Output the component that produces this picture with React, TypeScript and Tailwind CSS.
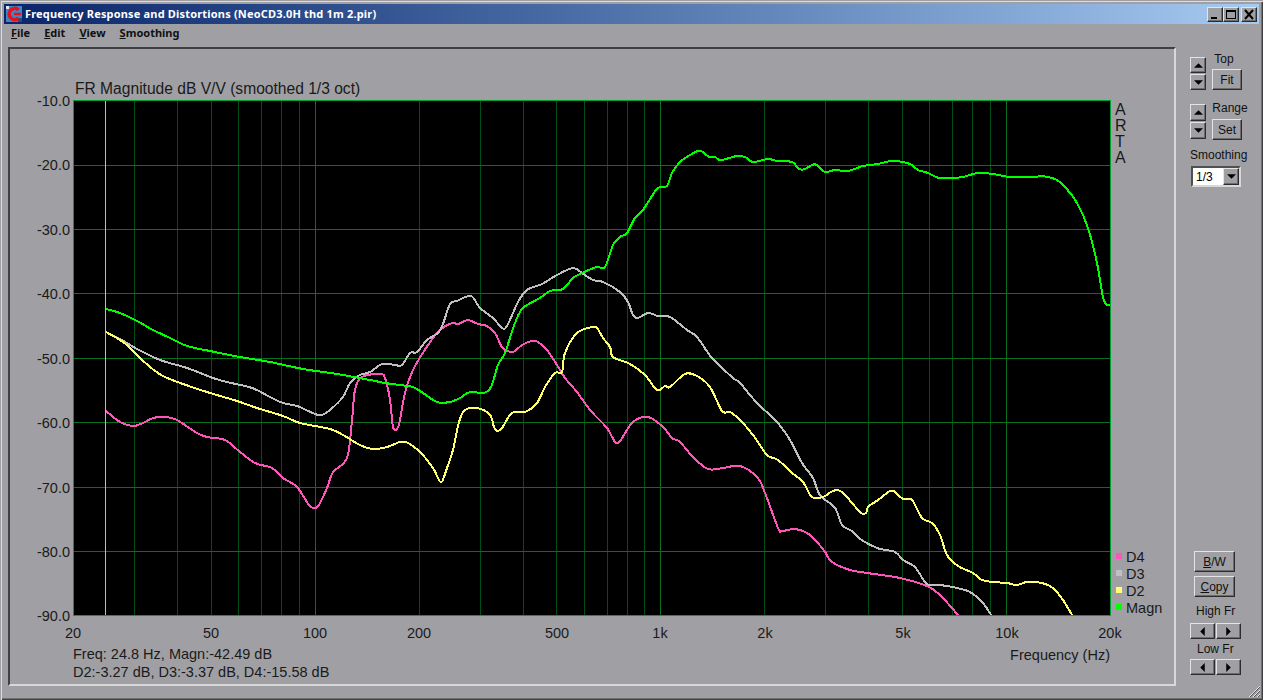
const magn = "106,309 120,313 137,321 153,330 170,338 187,346 210,351 240,357 270,362 303,369 337,374 370,380 385,383 400,385 413,387 423,393 437,402 450,402 460,398 470,392 483,393 491,387 498,365 505,353 515,323 523,308 540,298 550,291 563,289 573,278 582,273 597,267 605,267 613,245 620,237 627,233 635,218 643,210 652,196 658,188 667,186 672,173 680,162 690,155 698,151 703,152 709,157 715,157 721,160 737,156 745,157 753,162 768,159 777,161 792,162 799,169 805,169 812,165 817,165 825,172 835,170 848,171 863,166 878,164 890,161 897,161 910,164 918,170 928,173 939,178 952,178 963,177 978,173 993,174 1010,177 1035,177 1040,176 1055,179 1065,187 1077,203 1088,228 1097,263 1103,297 1107,305 1110,305"

const d3 = "106,332 120,339 137,349 160,360 187,368 213,378 227,382 252,388 270,397 283,403 297,406 315,414 322,415 330,410 343,397 350,383 360,375 370,372 382,364 395,365 402,365 410,353 417,352 427,340 438,333 443,324 450,304 457,301 471,296 480,308 493,318 502,328 507,326 518,302 527,290 542,284 557,275 573,268 582,273 593,280 603,282 620,292 628,302 633,315 638,318 648,313 658,316 670,317 687,330 697,337 712,358 733,378 740,383 757,403 777,422 790,440 802,463 813,478 820,495 835,508 842,525 852,531 860,539 877,548 895,552 903,560 915,567 927,584 940,585 957,588 970,592 983,603 991,615"

const d2 = "106,332 123,342 137,355 150,367 163,376 183,384 210,393 237,401 257,408 283,416 300,423 330,429 343,435 360,445 373,449 387,447 400,442 408,443 420,452 433,468 441,482 447,468 453,450 459,422 465,410 477,408 490,415 494,427 497,431 502,428 512,413 525,412 537,403 545,387 555,373 562,372 565,353 577,333 592,327 597,328 603,338 610,347 613,357 630,364 645,375 657,390 665,386 670,387 685,374 697,376 710,387 722,411 730,412 740,420 753,435 767,455 778,460 792,473 803,482 812,497 823,497 833,491 842,492 860,512 866,513 868,507 878,500 890,491 895,492 903,499 912,500 922,518 932,523 940,535 947,555 958,566 973,573 982,580 993,582 1007,583 1017,585 1027,582 1042,583 1053,588 1063,600 1072,615"

const d4 = "106,411 120,422 133,426 143,423 153,418 165,417 177,420 197,433 207,437 225,440 240,452 255,463 272,468 283,478 297,487 310,506 318,506 327,488 333,472 347,458 352,420 355,390 362,377 380,374 385,378 390,400 393,427 397,429 400,420 405,393 413,370 428,345 440,330 452,323 458,324 468,320 478,324 487,326 495,333 502,347 510,352 515,351 522,345 532,341 538,342 547,350 557,365 565,378 577,392 590,410 607,428 615,442 620,441 633,422 648,417 663,427 672,438 680,442 693,457 708,469 723,468 740,466 757,477 765,493 778,528 782,531 795,529 807,533 817,542 825,552 832,562 850,570 867,573 900,578 927,586 940,595 958,615"

// catmull-rom through the traced points, so the curves don't look like straight segments
function smooth(data: string) {
  const p = data.split(" ").map((s) => s.split(",").map(Number))
  let d = `M${p[0][0]} ${p[0][1]}`
  for (let i = 0; i < p.length - 1; i++) {
    const a = p[Math.max(i - 1, 0)]
    const b = p[i]
    const c = p[i + 1]
    const e = p[Math.min(i + 2, p.length - 1)]
    const c1x = b[0] + (c[0] - a[0]) / 6
    const c1y = b[1] + (c[1] - a[1]) / 6
    const c2x = c[0] - (e[0] - b[0]) / 6
    const c2y = c[1] - (e[1] - b[1]) / 6
    d += ` C${c1x.toFixed(1)} ${c1y.toFixed(1)} ${c2x.toFixed(1)} ${c2y.toFixed(1)} ${c[0]} ${c[1]}`
  }
  return d
}

const freqs = [30, 40, 50, 60, 70, 80, 90, 200, 300, 400, 500, 600, 700, 800, 900, 2000, 3000, 4000, 5000, 6000, 7000, 8000, 9000]
const decades = [100, 1000, 10000]
const xOf = (f: number) => Math.round(73 + 345.67 * Math.log10(f / 20)) + 0.5

const hLines = [165, 229, 293, 358, 422, 487, 551]
const yLabels = [
  ["-10.0", 106], ["-20.0", 170], ["-30.0", 235], ["-40.0", 299], ["-50.0", 364],
  ["-60.0", 428], ["-70.0", 493], ["-80.0", 557], ["-90.0", 621],
] as const
const xLabels = [
  ["20", 73], ["50", 211], ["100", 315], ["200", 419], ["500", 557],
  ["1k", 660], ["2k", 765], ["5k", 903], ["10k", 1007], ["20k", 1110],
] as const
const legend = [
  ["D4", 562, "#ff55bb", 553],
  ["D3", 579, "#c0c0c0", 570],
  ["D2", 596, "#ffff70", 587],
  ["Magn", 613, "#00ff00", 604],
] as const

const bevel = "border border-t-[#e4e4e4] border-l-[#e4e4e4] border-r-[#2c2c2c] border-b-[#2c2c2c] shadow-[inset_-1px_-1px_0_#6c6c6c] bg-[#a0a0a4]"
const label = "font-['Liberation_Sans',sans-serif] text-[12px] leading-[14px] text-[#111]"

function Tri({ dir }: { dir: "up" | "down" | "left" | "right" }) {
  const pts = { up: "0,4 4,0 8,4", down: "0,0 8,0 4,4", left: "4,0 4,8 0,4", right: "0,0 4,4 0,8" }[dir]
  const box = dir === "up" || dir === "down" ? "w-[9px] h-[5px]" : "w-[5px] h-[9px]"
  return (
    <svg className={box} viewBox={dir === "up" || dir === "down" ? "0 0 8 4" : "0 0 4 8"}>
      <polygon points={pts} fill="#000" />
    </svg>
  )
}

function Spin({ dir, className }: { dir: "up" | "down" | "left" | "right"; className: string }) {
  return (
    <div className={`${bevel} ${className} flex items-center justify-center`}>
      <Tri dir={dir} />
    </div>
  )
}

function PushButton({ className, children }: { className: string; children: React.ReactNode }) {
  return (
    <div className={`${bevel} ${className} ${label} flex items-center justify-center`}>
      {children}
    </div>
  )
}

function CapButton({ children }: { children: React.ReactNode }) {
  return (
    <div className={`${bevel} w-[16px] h-[15px] flex items-center justify-center`}>
      <svg className="w-[12px] h-[11px]" viewBox="0 0 12 11">{children}</svg>
    </div>
  )
}

function Chart() {
  return (
    <svg className="block w-[1164px] h-[635px]" viewBox="10 49 1164 635">
      <defs>
        <clipPath id="plot">
          <rect x="73" y="100" width="1038" height="516" />
        </clipPath>
      </defs>
      <rect x="73" y="100" width="1038" height="516" fill="#000" />
      <g shapeRendering="crispEdges" strokeWidth="1">
        {freqs.map((f) => (
          <line key={f} x1={xOf(f)} x2={xOf(f)} y1="100" y2="616" stroke="#004f14" />
        ))}
        {decades.map((f) => (
          <line key={f} x1={xOf(f)} x2={xOf(f)} y1="100" y2="616" stroke="#0a7020" />
        ))}
        {hLines.map((y) => (
          <line key={y} x1="73" x2="1111" y1={y + 0.5} y2={y + 0.5} stroke="#0a7020" />
        ))}
        <line x1="105.5" x2="105.5" y1="100" y2="616" stroke="#d0d020" />
        <rect x="73.5" y="100.5" width="1037" height="515" fill="none" stroke="#00a030" />
      </g>
      <g clipPath="url(#plot)" fill="none" strokeWidth="2" shapeRendering="crispEdges">
        <path d={smooth(d4)} stroke="#ff55bb" />
        <path d={smooth(d3)} stroke="#c0c0c0" />
        <path d={smooth(d2)} stroke="#ffff70" />
        <path d={smooth(magn)} stroke="#00ff00" />
      </g>
      <g fontFamily="'Liberation Sans', sans-serif" fontSize="14.5" fill="#1a1a1a">
        <text x="75" y="94" fontSize="15.6">FR Magnitude dB V/V (smoothed 1/3 oct)</text>
        {yLabels.map(([t, y]) => (
          <text key={t} x="70" y={y} textAnchor="end">{t}</text>
        ))}
        {xLabels.map(([t, x]) => (
          <text key={t} x={x} y="638" textAnchor="middle">{t}</text>
        ))}
        <text x="1110" y="660" textAnchor="end">Frequency (Hz)</text>
        <text x="73" y="659">Freq: 24.8 Hz, Magn:-42.49 dB</text>
        <text x="73" y="677">D2:-3.27 dB, D3:-3.37 dB, D4:-15.58 dB</text>
        {["A", "R", "T", "A"].map((c, i) => (
          <text key={i} x="1115" y={115 + i * 16} fontSize="16">{c}</text>
        ))}
        {legend.map(([t, y, color, top]) => (
          <g key={t}>
            <rect x="1116" y={top} width="6" height="6" fill={color} shapeRendering="crispEdges" />
            <text x="1126" y={y}>{t}</text>
          </g>
        ))}
      </g>
    </svg>
  )
}

export default function App() {
  return (
    <div className="w-[1263px] h-[700px] flex flex-col bg-[#a0a0a4] overflow-hidden p-[4px] shadow-[inset_1px_1px_0_#a0a0a4,inset_2px_2px_0_#dcdcdc,inset_-1px_-1px_0_#404040,inset_-2px_-2px_0_#707070] relative">
      {/* title bar */}
      <div className="h-[20px] shrink-0 flex items-center bg-gradient-to-r from-[#0a246a] to-[#a6caf0] pl-[2px] pr-[2px]">
        <svg className="w-[16px] h-[16px] shrink-0" viewBox="0 0 16 16">
          <rect width="16" height="16" fill="#3f86c4" />
          <rect x="0" y="0" width="3" height="3" fill="#dfeaf5" />
          <rect x="12" y="12" width="4" height="4" fill="#1d4f86" />
          <path d="M12.5 3.8 A5.6 5.6 0 1 0 12.5 12.2" fill="none" stroke="#e8101a" strokeWidth="3.6" />
          <path d="M8 8 H15" stroke="#e8101a" strokeWidth="2.4" />
        </svg>
        <span className="ml-[3px] font-['Noto_Sans',sans-serif] font-bold text-[11px] tracking-[0.18px] text-white whitespace-nowrap">
          Frequency Response and Distortions (NeoCD3.0H thd 1m 2.pir)
        </span>
        <div className="ml-auto flex items-center">
          <CapButton><rect x="2" y="8" width="6" height="2" fill="#000" /></CapButton>
          <CapButton>
            <rect x="1.5" y="1.5" width="9" height="8" fill="none" stroke="#000" />
            <rect x="1" y="1" width="10" height="2" fill="#000" />
          </CapButton>
          <div className="w-[2px]" />
          <CapButton>
            <path d="M2 1 L10 10 M10 1 L2 10" stroke="#000" strokeWidth="2" />
          </CapButton>
        </div>
      </div>

      {/* menu bar */}
      <div className="h-[19px] shrink-0 flex items-center gap-[14px] pl-[7px] font-['Noto_Sans',sans-serif] font-bold text-[11px] text-[#111]">
        <span><span className="underline">F</span>ile</span>
        <span><span className="underline">E</span>dit</span>
        <span><span className="underline">V</span>iew</span>
        <span><span className="underline">S</span>moothing</span>
      </div>

      <div className="flex mt-[4px] pl-[4px]">
        <div className="w-[1168px] h-[639px] border-2 border-t-[#404040] border-l-[#404040] border-r-[#d8d8d8] border-b-[#d8d8d8] shrink-0">
          <Chart />
        </div>

        {/* side controls */}
        <div className="w-[70px] pl-[14px] pt-[10px] h-[639px] flex flex-col">
          <div className="flex">
            <div className="flex flex-col gap-[1px]">
              <Spin dir="up" className="w-[16px] h-[16px]" />
              <Spin dir="down" className="w-[16px] h-[16px]" />
            </div>
            <div className="ml-[6px] flex flex-col items-center w-[30px]">
              <span className={`${label} mt-[-5px] h-[17px] mr-[6px]`}>Top</span>
              <PushButton className="w-[30px] h-[21px]">Fit</PushButton>
            </div>
          </div>
          <div className="flex mt-[14px]">
            <div className="flex flex-col gap-[1px]">
              <Spin dir="up" className="w-[16px] h-[17px]" />
              <Spin dir="down" className="w-[16px] h-[17px]" />
            </div>
            <div className="ml-[6px] flex flex-col items-center w-[30px]">
              <span className={`${label} mt-[-3px] h-[18px] ml-[6px]`}>Range</span>
              <PushButton className="w-[30px] h-[21px]">Set</PushButton>
            </div>
          </div>
          <span className={`${label} mt-[8px]`}>Smoothing</span>
          <div className="ml-[1px] mt-[4px] w-[50px] h-[21px] border-2 border-t-[#505050] border-l-[#505050] border-r-[#d8d8d8] border-b-[#d8d8d8] bg-white flex items-center justify-between">
            <span className={`${label} pl-[3px] text-black`}>1/3</span>
            <Spin dir="down" className="w-[16px] h-[17px]" />
          </div>

          <div className="mt-auto mb-[11px] flex flex-col">
            <PushButton className="ml-[4px] w-[41px] h-[21px]"><span><span className="underline">B</span>/W</span></PushButton>
            <PushButton className="ml-[4px] mt-[4px] w-[41px] h-[21px]"><span><span className="underline">C</span>opy</span></PushButton>
            <span className={`${label} mt-[7px] ml-[6px]`}>High Fr</span>
            <div className="flex gap-[1px] mt-[5px]">
              <Spin dir="left" className="w-[25px] h-[16px]" />
              <Spin dir="right" className="w-[25px] h-[16px]" />
            </div>
            <span className={`${label} mt-[3px] ml-[7px]`}>Low Fr</span>
            <div className="flex gap-[1px] mt-[3px]">
              <Spin dir="left" className="w-[25px] h-[16px]" />
              <Spin dir="right" className="w-[25px] h-[16px]" />
            </div>
          </div>
        </div>
      </div>

      {/* resize grip */}
      <svg className="absolute right-[2px] bottom-[2px] w-[13px] h-[13px]" viewBox="0 0 13 13">
        <path d="M1 12 L12 1 M5 12 L12 5 M9 12 L12 9" stroke="#e8e8e8" strokeWidth="1" />
        <path d="M2 12 L12 2 M6 12 L12 6 M10 12 L12 10" stroke="#555" strokeWidth="1" />
      </svg>
    </div>
  )
}
